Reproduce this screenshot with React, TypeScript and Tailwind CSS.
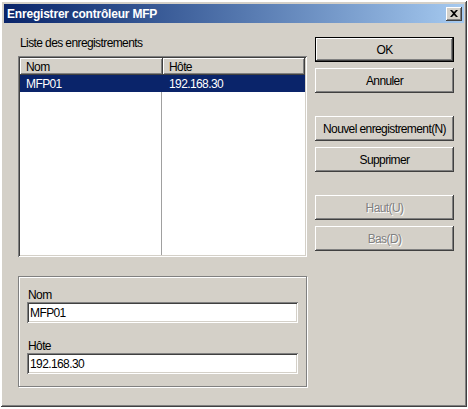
import React from 'react';

const face = 'bg-[#d4d0c8]';
const raised =
  'shadow-[inset_-1px_-1px_0_#404040,inset_1px_1px_0_#ffffff,inset_-2px_-2px_0_#808080,inset_2px_2px_0_#d4d0c8]';
const sunken =
  'shadow-[inset_1px_1px_0_#808080,inset_-1px_-1px_0_#ffffff,inset_2px_2px_0_#404040,inset_-2px_-2px_0_#d4d0c8]';
const txt = 'text-[12px] tracking-[-0.6px]';

const Button = ({
  label,
  disabled,
  isDefault,
}: {
  label: string;
  disabled?: boolean;
  isDefault?: boolean;
}) => (
  <div className={`h-[25px] w-full ${isDefault ? 'border border-black' : ''}`}>
    <div
      className={`h-full w-full ${face} ${raised} flex items-center justify-center ${txt} ${
        disabled ? 'text-[#808080] [text-shadow:1px_1px_0_#ffffff]' : 'text-black'
      }`}
    >
      {label}
    </div>
  </div>
);

const Field = ({label, value}: {label: string; value: string}) => (
  <div className="flex flex-col">
    <div className={`h-[14px] leading-[14px] pl-[1px] ${txt}`}>{label}</div>
    <div className={`h-[21px] bg-white ${sunken} flex items-center px-[3px] ${txt}`}>{value}</div>
  </div>
);

const HeaderCell = ({label, className}: {label: string; className?: string}) => (
  <div className={`h-[17px] ${face} ${raised} flex items-center px-[6px] ${txt} ${className ?? ''}`}>
    {label}
  </div>
);

export default function App() {
  return (
    <div
      className="w-[468px] h-[409px] bg-white pt-[1px] pl-[1px]"
      style={{fontFamily: '"Liberation Sans", Arial, sans-serif'}}
    >
      <div className={`w-[466px] h-[406px] ${face} ${raised} p-[3px] flex flex-col`}>
        {/* title bar */}
        <div className="h-[19px] bg-linear-to-r from-[#0a246a] to-[#a6caf0] flex items-center justify-between pl-[3px] pr-[2px]">
          <span className="text-white font-bold text-[12px] tracking-[-0.2px] leading-none">
            Enregistrer contrôleur MFP
          </span>
          <div className={`w-[16px] h-[14px] ${face} ${raised} flex items-center justify-center`}>
            <svg width="8" height="7" viewBox="0 0 8 7">
              <path d="M0 0h2l2 2 2-2h2L5 3.5 8 7H6L4 5 2 7H0l3-3.5z" fill="#000" />
            </svg>
          </div>
        </div>

        <div className="flex flex-1 pl-[14px] pr-[10px] pt-[13px]">
          {/* left column */}
          <div className="w-[289px] flex flex-col">
            <div className={`h-[20px] leading-[14px] pl-[2px] ${txt}`}>Liste des enregistrements</div>
            <div className={`h-[201px] bg-white ${sunken} p-[2px] flex flex-col`}>
              <div className="flex">
                <HeaderCell label="Nom" className="w-[143px]" />
                <HeaderCell label="Hôte" className="flex-1" />
              </div>
              <div className="flex-1 flex flex-col">
                <div className={`h-[17px] bg-[#0a246a] text-white flex ${txt}`}>
                  <div className="w-[143px] px-[6px] flex items-center">MFP01</div>
                  <div className="flex-1 px-[6px] flex items-center">192.168.30</div>
                </div>
                <div className="flex-1 flex">
                  <div className="w-[142px] border-r border-[#a0a0a0]" />
                  <div className="flex-1" />
                </div>
              </div>
            </div>

            {/* details group */}
            <div className="mt-[19px] h-[111px] border border-[#808080] shadow-[inset_1px_1px_0_#ffffff,1px_1px_0_#ffffff] px-[8px] pt-[11px] flex flex-col gap-[16px]">
              <Field label="Nom" value="MFP01" />
              <Field label="Hôte" value="192.168.30" />
            </div>
          </div>

          {/* right column */}
          <div className="w-[139px] ml-[8px] flex flex-col pt-[1px]">
            <div className="flex flex-col gap-[6px]">
              <Button label="OK" isDefault />
              <Button label="Annuler" />
            </div>
            <div className="mt-[23px] flex flex-col gap-[6px]">
              <Button label="Nouvel enregistrement(N)" />
              <Button label="Supprimer" />
            </div>
            <div className="mt-[23px] flex flex-col gap-[6px]">
              <Button label="Haut(U)" disabled />
              <Button label="Bas(D)" disabled />
            </div>
          </div>
        </div>
      </div>
    </div>
  );
}
